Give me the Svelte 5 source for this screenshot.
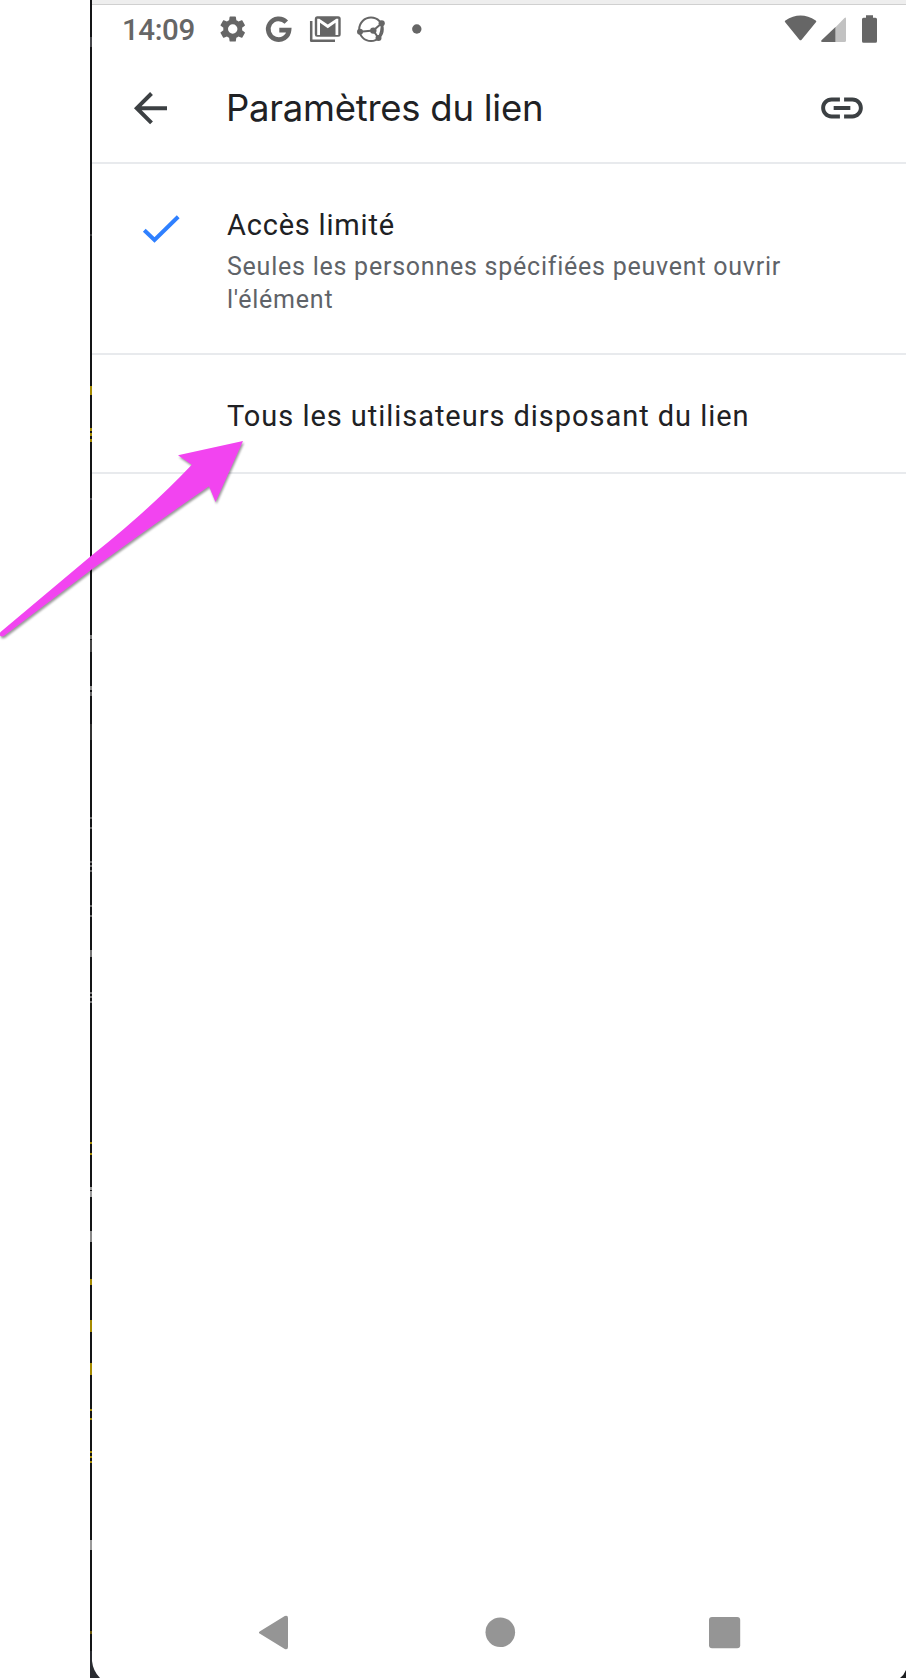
<script>
  const marks = [
    { y: 37, h: 10, c: '#45464a' }, { y: 234, h: 2, c: '#3a3b3e' },
    { y: 386, h: 9, c: '#a58a00' }, { y: 428, h: 3, c: '#a58a00' },
    { y: 433, h: 3, c: '#a58a00' }, { y: 439, h: 3, c: '#a58a00' },
    { y: 498, h: 2, c: '#4a4b4e' }, { y: 635, h: 4, c: '#777' },
    { y: 640, h: 12, c: '#444' }, { y: 686, h: 4, c: '#888' },
    { y: 692, h: 4, c: '#666' }, { y: 724, h: 16, c: '#333' },
    { y: 817, h: 2, c: '#666' }, { y: 827, h: 2, c: '#666' },
    { y: 861, h: 2, c: '#666' }, { y: 865, h: 2, c: '#666' }, { y: 870, h: 2, c: '#666' },
    { y: 905, h: 2, c: '#666' }, { y: 915, h: 2, c: '#666' },
    { y: 950, h: 7, c: '#777' }, { y: 992, h: 2, c: '#777' },
    { y: 996, h: 2, c: '#777' }, { y: 1001, h: 2, c: '#777' },
    { y: 1142, h: 2, c: '#a58a00' }, { y: 1153, h: 2, c: '#a58a00' },
    { y: 1187, h: 3, c: '#999' }, { y: 1191, h: 6, c: '#999' },
    { y: 1231, h: 11, c: '#888' }, { y: 1279, h: 6, c: '#a58a00' },
    { y: 1320, h: 12, c: '#a58a00' }, { y: 1363, h: 12, c: '#a58a00' },
    { y: 1409, h: 2, c: '#a58a00' }, { y: 1418, h: 2, c: '#a58a00' },
    { y: 1451, h: 2, c: '#a58a00' }, { y: 1456, h: 2, c: '#a58a00' }, { y: 1461, h: 2, c: '#a58a00' },
    { y: 1540, h: 10, c: '#999' }, { y: 1631, h: 3, c: '#665508' }
  ];
</script>

<div class="page">
  <svg class="edge" width="16" height="1678" viewBox="0 0 16 1678">
    <rect width="2" height="1678" fill="#141517" />
    {#each marks as m}
      <rect x="0" y={m.y} width="2" height={m.h} fill={m.c} />
    {/each}
    <path d="M0 1651H2V1661Q3 1671 10 1678H0Z" fill="#292b30" />
  </svg>
  <main class="screen">
    <div class="strip"></div>
    <div class="status">
      <span class="time">14:09</span>
      <svg class="notif" width="220" height="36" viewBox="210 11 220 36" fill="#666">
        <path transform="translate(217 13.3) scale(1.31)" d="M19.14 12.94c.04-.3.06-.61.06-.94 0-.32-.02-.64-.07-.94l2.03-1.58c.18-.14.23-.41.12-.61l-1.92-3.32c-.12-.22-.37-.29-.59-.22l-2.39.96c-.5-.38-1.03-.7-1.62-.94L14.4 2.81c-.04-.24-.24-.41-.48-.41h-3.84c-.24 0-.43.17-.47.41L9.25 5.35c-.59.24-1.13.57-1.62.94L5.24 5.33c-.22-.08-.47 0-.59.22L2.74 8.87c-.12.21-.08.47.12.61l2.03 1.58C4.84 11.36 4.8 11.69 4.8 12s.02.64.07.94l-2.03 1.58c-.18.14-.23.41-.12.61l1.92 3.32c.12.22.37.29.59.22l2.39-.96c.5.38 1.03.7 1.62.94l.36 2.54c.05.24.24.41.48.41h3.84c.24 0 .44-.17.47-.41l.36-2.54c.59-.24 1.13-.56 1.62-.94l2.39.96c.22.08.47 0 .59-.22l1.92-3.32c.12-.22.07-.47-.12-.61zM12 15.6A3.6 3.6 0 1 1 12 8.4a3.6 3.6 0 0 1 0 7.2z" />
        <path d="M286.3 22.2A10.4 10.4 0 1 0 289 30.2H279.3" fill="none" stroke="#666" stroke-width="4.7" />
        <path fill-rule="evenodd" d="M317 16.2H338.2Q340.7 16.2 340.7 18.7V34.3Q340.7 36.8 338.2 36.8H317Q314.8 36.8 314.8 34.3V18.7Q314.8 16.2 317 16.2ZM317.2 35H320V22.8L327.8 28.2 335.5 22.8V35H338.3V18.7H336.3L327.8 24.6 319.3 18.7H317.2Z" />
        <path d="M311.2 21V40.7H335" fill="none" stroke="#666" stroke-width="2.5" stroke-linejoin="round" />
        <g fill="none" stroke="#666" stroke-width="2">
          <circle cx="371" cy="29.3" r="11.8" />
          <path d="M360 31.7 373.3 30.6 381.7 23.3M373.3 30.6 378.5 38M381.7 23.3Q382 32 378.5 38" />
        </g>
        <circle cx="360" cy="31.7" r="3" /><circle cx="373.3" cy="30.6" r="3.2" />
        <circle cx="381.7" cy="23.3" r="3.1" /><circle cx="378.5" cy="38" r="3" />
        <circle cx="416.8" cy="29" r="4.7" />
      </svg>
      <svg class="system" width="106" height="36" viewBox="780 11 106 36" fill="#666">
        <path d="M785.2 22.2Q784.3 21.2 785.4 20.4Q800.5 10.8 815.7 20.4Q816.8 21.2 815.9 22.2L801.6 39.7Q800.5 41 799.4 39.7Z" />
        <path d="M835.5 27.3 844.5 18Q846 16.6 846 18.8V40.5Q846 42 844.5 42H835.5Z" fill="#c2c2c2" />
        <path d="M835.5 27V42H822.5Q820.3 42 821.5 40.3Z" />
        <path d="M866 17.8V15.2H873V17.8H875.5Q877 17.8 877 19.3V41.2Q877 42.7 875.5 42.7H863.5Q862 42.7 862 41.2V19.3Q862 17.8 863.5 17.8Z" />
      </svg>
    </div>
    <header>
      <svg class="back" width="36" height="36" viewBox="132 90 36 36" fill="none" stroke="#3c4043" stroke-width="4">
        <path d="M167 108.2H137M151.5 93.5 136.8 108.2 151.5 122.9" />
      </svg>
      <h1>Paramètres du lien</h1>
      <svg class="link" width="50" height="50" viewBox="0 0 24 24" fill="#3c4043"><path d="M3.9 12c0-1.71 1.39-3.1 3.1-3.1h4V7H7c-2.76 0-5 2.24-5 5s2.24 5 5 5h4v-1.9H7c-1.71 0-3.1-1.39-3.1-3.1zM8 12.95h8v-1.9H8v1.9zm9-5.95h-4v1.9h4c1.71 0 3.1 1.39 3.1 3.1s-1.39 3.1-3.1 3.1h-4V17h4c2.76 0 5-2.24 5-5s-2.24-5-5-5z" /></svg>
    </header>
    <section class="option first">
      <svg class="check" width="42" height="36" viewBox="140 211 42 36" fill="none" stroke="#2f80ff" stroke-width="4">
        <path d="M144.3 230.2 154.5 240 178.2 216.8" />
      </svg>
      <div>
        <h2>Accès limité</h2>
        <p>Seules les personnes spécifiées peuvent ouvrir<br />l'élément</p>
      </div>
    </section>
    <section class="option second"><h2>Tous les utilisateurs disposant du lien</h2></section>
    <nav>
      <svg width="814" height="98" viewBox="92 1580 814 98" fill="#959595">
        <path d="M260 1631.2 284.8 1616Q288 1614.8 288 1618V1647Q288 1650 284.8 1649L260 1633.8Q257.8 1632.5 260 1631.2Z" />
        <circle cx="500.3" cy="1632.3" r="14.8" />
        <rect x="709" y="1617" width="31.2" height="31.2" rx="3" />
        <path d="M906 1670Q904 1675 900 1678H906Z" fill="#1c1d20" />
      </svg>
    </nav>
  </main>
  <svg class="pointer" width="260" height="230" viewBox="0 420 260 230">
    <path d="M243 441 178 455.2 191.8 464.8Q149 510 91 556L.5 632Q-1.5 636 2 636.5Q4.5 636 6.5 634L91 570Q150 527 209 486.2L215.5 502Z" fill="#f244f0" />
  </svg>
</div>

<style>
  :global(body) { margin: 0; background: #fff; }
  .page { position: relative; display: flex; width: 906px; height: 1678px; padding-left: 90px; box-sizing: border-box; overflow: hidden; font-family: Roboto, "Liberation Sans", sans-serif; background: #fff; }
  svg { display: block; flex: none; }
  .edge { margin-right: -14px; }
  .screen { width: 814px; flex: none; display: flex; flex-direction: column; }
  .strip { height: 4px; background: #eee; border-bottom: 1px solid #d0d0d0; }
  .status { height: 46px; display: flex; align-items: flex-start; padding-top: 6px; box-sizing: border-box; }
  .time { width: 88px; padding-left: 30px; color: #666; font-size: 29.5px; line-height: 38px; font-weight: 500; letter-spacing: -0.4px; white-space: nowrap; }
  .system { margin-left: auto; margin-right: 20px; }
  header { height: 113px; display: flex; align-items: flex-start; box-sizing: border-box; border-bottom: 2px solid #e8eaed; }
  .back { margin: 39px 0 0 40px; }
  h1, h2, p { margin: 0; font-weight: 400; white-space: nowrap; }
  h1 { margin: 32px 0 0 58px; font: 400 36.5px/50px Inter, Roboto, sans-serif; letter-spacing: -0.26px; color: #202124; }
  .link { margin: 31.5px 39.5px 0 auto; }
  .option { display: flex; box-sizing: border-box; border-bottom: 2px solid #e8eaed; color: #202124; }
  .first { height: 191px; padding: 41px 0 0 48px; }
  .check { margin: 6px 45px 0 0; }
  h2 { font-size: 29px; line-height: 40px; letter-spacing: 0.8px; }
  p { font-size: 25px; line-height: 33px; letter-spacing: 0.76px; color: #5f6368; margin-top: 5px; }
  .second { height: 119px; padding: 41px 0 0 135px; }
  .second h2 { letter-spacing: 0.96px; }
  nav { margin-top: auto; }
  .pointer { position: absolute; left: 0; top: 420px; filter: drop-shadow(1px 2px 1px #0006); }
</style>
